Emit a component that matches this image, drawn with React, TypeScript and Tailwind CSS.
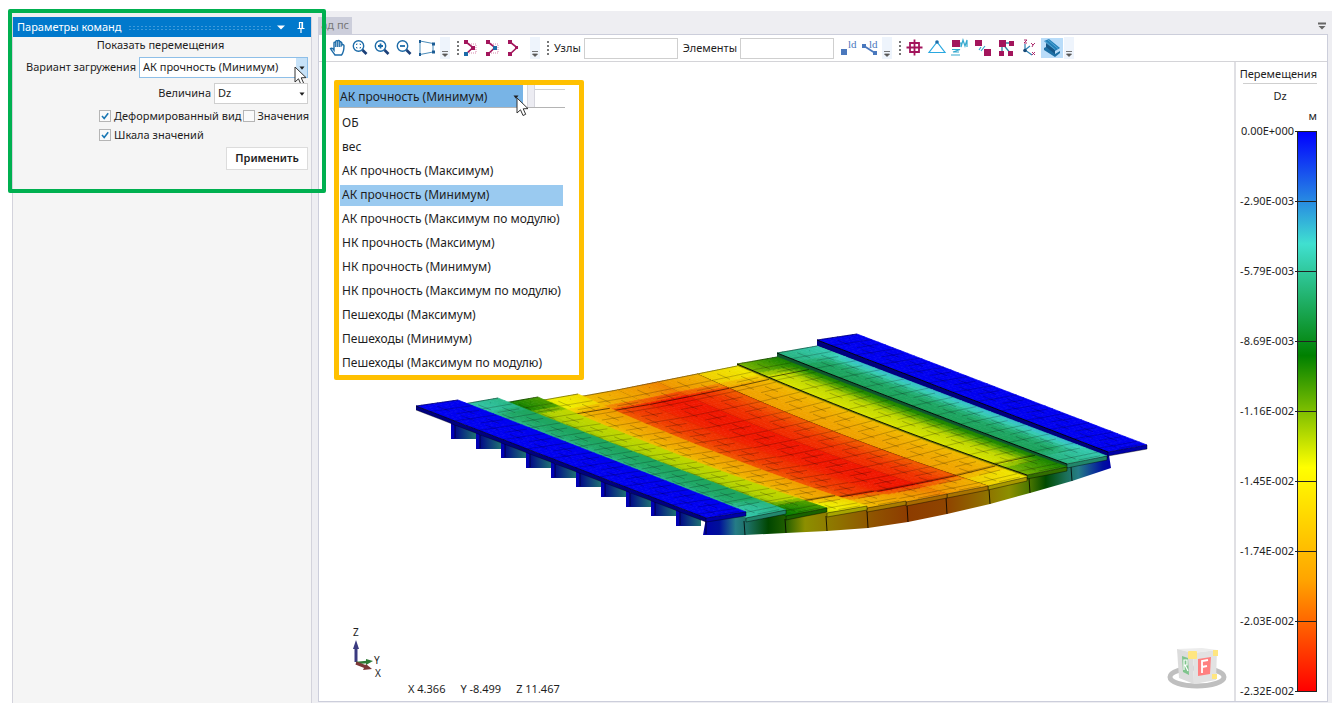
import { useState } from "react";
import type { ReactNode } from "react";
import { clsx } from "clsx";

const LOAD_CASES = [
  "ОБ",
  "вес",
  "АК прочность (Максимум)",
  "АК прочность (Минимум)",
  "АК прочность (Максимум по модулю)",
  "НК прочность (Максимум)",
  "НК прочность (Минимум)",
  "НК прочность (Максимум по модулю)",
  "Пешеходы (Максимум)",
  "Пешеходы (Минимум)",
  "Пешеходы (Максимум по модулю)",
];

const SCALE = [
  "0.00E+000",
  "-2.90E-003",
  "-5.79E-003",
  "-8.69E-003",
  "-1.16E-002",
  "-1.45E-002",
  "-1.74E-002",
  "-2.03E-002",
  "-2.32E-002",
];

// colour ramp, 0 = no displacement, 1 = maximum
const RAMP = [
  [0, 0, 255],
  [64, 224, 208],
  [0, 128, 0],
  [255, 255, 0],
  [255, 165, 0],
  [255, 0, 0],
];

const ramp = (t: number, light = 0.94) => {
  const x = Math.max(0, Math.min(0.9999, t)) * 5;
  const i = Math.floor(x);
  const f = x - i;
  const c = RAMP[i].map((a, n) =>
    Math.round((a + (RAMP[i + 1][n] - a) * f) * light)
  );
  return `rgb(${c.join(",")})`;
};

type Strip = {
  back: number[]; // xl, yl, xr, yr
  front: number[];
  end: number[]; // value at the supports, left and right edge
  mid: number[]; // value in the span: left edge, middle, right edge
  sag: number[];
  side: number; // height of the visible side face
};

const STRIPS: Strip[] = [
  { back: [416, 406, 458, 400], front: [706, 518, 746, 512], end: [0, 0], mid: [0, 0, 0], sag: [0, 0], side: 4 },
  { back: [458, 405, 498, 398], front: [746, 518, 786, 510], end: [0.22, 0.26], mid: [0.22, 0.295, 0.3], sag: [0, 1], side: 0 },
  { back: [498, 404, 538, 397], front: [786, 516, 827, 508], end: [0.4, 0.46], mid: [0.46, 0.55, 0.56], sag: [2, 4], side: 0 },
  { back: [538, 401, 578, 394], front: [827, 513, 867, 506], end: [0.57, 0.65], mid: [0.68, 0.76, 0.79], sag: [4, 5], side: 0 },
  { back: [578, 397, 617, 390], front: [867, 508, 906, 501], end: [0.72, 0.78], mid: [0.87, 0.92, 0.94], sag: [5, 6], side: 0 },
  { back: [617, 390, 657, 382], front: [906, 502, 947, 494], end: [0.78, 0.83], mid: [0.95, 0.97, 0.97], sag: [6, 6], side: 0 },
  { back: [657, 382, 697, 374], front: [947, 494, 988, 486], end: [0.81, 0.75], mid: [0.95, 0.93, 0.88], sag: [6, 5], side: 0 },
  { back: [697, 374, 737, 366], front: [988, 486, 1027, 477], end: [0.68, 0.62], mid: [0.79, 0.77, 0.73], sag: [5, 3], side: 1 },
  { back: [737, 364, 777, 357], front: [1027, 475, 1067, 467], end: [0.5, 0.42], mid: [0.58, 0.56, 0.41], sag: [3, 1], side: 3 },
  { back: [777, 353, 817, 346], front: [1067, 464, 1107, 456], end: [0.27, 0.22], mid: [0.31, 0.295, 0.17], sag: [1, 0], side: 5 },
  { back: [817, 340, 857, 334], front: [1108, 452, 1147, 445], end: [0, 0], mid: [0, 0, 0], sag: [0, 0], side: 6 },
];

const lerp = (a: number, b: number, t: number) => a + (b - a) * t;

const pointAt = (s: Strip, u: number, v: number) => {
  const x = lerp(lerp(s.back[0], s.back[2], u), lerp(s.front[0], s.front[2], u), v);
  const y = lerp(lerp(s.back[1], s.back[3], u), lerp(s.front[1], s.front[3], u), v);
  return [x, y + lerp(s.sag[0], s.sag[1], u) * 4 * v * (1 - v)];
};

const valueAt = (s: Strip, u: number, v: number) => {
  const d = Math.max(0, Math.min(1, (Math.min(v, 1 - v) - 0.06) / 0.05));
  const mid = u < 0.5 ? lerp(s.mid[0], s.mid[1], u * 2) : lerp(s.mid[1], s.mid[2], u * 2 - 1);
  return lerp(lerp(s.end[0], s.end[1], u), mid, d);
};

const fmt = (p: number[]) => `${p[0].toFixed(1)},${p[1].toFixed(1)}`;

const edge = (s: Strip, u: number, from = 0, to = 1, drop = 0) =>
  Array.from({ length: 13 }, (_, i) => {
    const [x, y] = pointAt(s, u, lerp(from, to, i / 12));
    return fmt([x, y + drop]);
  });

const ACROSS = 8;
const ALONG = 40;
const CUTS = 12;

const DeckStrip = ({ strip, index }: { strip: Strip; index: number }) => {
  const facets: ReactNode[] = [];
  for (let i = 0; i < ACROSS; i++) {
    for (let j = 0; j < ALONG; j++) {
      const [u0, u1, v0, v1] = [i / ACROSS, (i + 1) / ACROSS, j / ALONG, (j + 1) / ALONG];
      const color = ramp(valueAt(strip, (u0 + u1) / 2, (v0 + v1) / 2));
      facets.push(
        <polygon
          key={`${i}-${j}`}
          points={[
            pointAt(strip, u0, v0),
            pointAt(strip, u1, v0),
            pointAt(strip, u1, v1),
            pointAt(strip, u0, v1),
          ].map(fmt).join(" ")}
          fill={color}
          stroke={color}
          strokeWidth="0.7"
        />
      );
    }
  }

  const [x1, y1, x2, y2] = strip.front;
  const lip = lerp(strip.end[0], strip.end[1], 0.5);
  const inner = index > 2 && index < 9;

  return (
    <g>
      {facets}
      {strip.side > 0 && (
        <polygon
          points={[...edge(strip, 0), ...edge(strip, 0, 1, 0, strip.side)].join(" ")}
          fill={ramp(strip.mid[0], 0.5)}
        />
      )}
      <polygon
        points={`${x1},${y1} ${x2},${y2} ${x2},${y2 + 4} ${x1},${y1 + 4}`}
        fill={ramp(lip, 0.66)}
        stroke="#000"
        strokeOpacity="0.7"
        strokeWidth="0.6"
      />
      <g fill="none" stroke="#000" strokeWidth="0.7">
        <g strokeOpacity="0.36" strokeWidth="0.6">
          <polyline points={edge(strip, 0.36, 0.02, 0.98).join(" ")} strokeDasharray="14 12" />
          <polyline points={edge(strip, 0.66, 0.02, 0.98).join(" ")} strokeDasharray="14 12" strokeDashoffset="13" />
          {Array.from({ length: CUTS }, (_, j) => {
            const full = (j + 0.6) / CUTS;
            const half = Math.min(0.99, (j + 1.05) / CUTS);
            return (
              <path
                key={j}
                d={`M${fmt(pointAt(strip, 0, full))} L${fmt(pointAt(strip, 1, full))} M${fmt(pointAt(strip, 0.36, half))} L${fmt(pointAt(strip, 0.9, half))}`}
              />
            );
          })}
        </g>
        {inner && (
          <path
            d={`M${fmt(pointAt(strip, 0, 0.11))} L${fmt(pointAt(strip, 1, 0.11))} M${fmt(pointAt(strip, 0, 0.89))} L${fmt(pointAt(strip, 1, 0.89))}`}
            strokeOpacity="0.8"
          />
        )}
        <polyline
          points={edge(strip, 0).join(" ")}
          strokeOpacity={index > 6 || index === 0 ? 0.9 : 0.5}
          strokeWidth={index > 6 ? 1 : 0.7}
        />
        {strip.side > 2 && (
          <polyline points={edge(strip, 0, 0, 1, strip.side).join(" ")} strokeOpacity="0.5" />
        )}
        <path
          d={`M${strip.back[0]},${strip.back[1]} L${strip.back[2]},${strip.back[3]}`}
          strokeOpacity="0.6"
        />
      </g>
    </g>
  );
};

const FRONT_BOTTOM = [
  [703, 535], [745, 535], [786, 533], [827, 531], [868, 528], [908, 522],
  [947, 514], [990, 504], [1030, 493], [1072, 481], [1111, 468],
];

const FACE_STOPS = [
  ["0", "#0000a8"], ["0.04", "#00109a"], ["0.08", "#257c86"], ["0.11", "#1c6f62"],
  ["0.16", "#004600"], ["0.2", "#1e5c00"], ["0.25", "#8c8f00"], ["0.33", "#8f7300"],
  ["0.42", "#8f5200"], ["0.5", "#8d3c00"], ["0.6", "#8f4500"], ["0.68", "#8f6a00"],
  ["0.75", "#8c8f00"], ["0.8", "#4a7600"], ["0.84", "#004a00"], ["0.89", "#1c7058"],
  ["0.92", "#257c86"], ["0.98", "#0010a0"], ["1", "#0000a8"],
];

const Bridge = () => (
  <g>
    <defs>
      <linearGradient id="face" x1="703" x2="1111" y1="0" y2="0" gradientUnits="userSpaceOnUse">
        {FACE_STOPS.map(([offset, color]) => (
          <stop key={offset} offset={offset} stopColor={color} />
        ))}
      </linearGradient>
      <linearGradient id="tooth" x1="0" x2="1" y1="0" y2="0">
        <stop offset="0.1" stopColor="#00008a" />
        <stop offset="0.45" stopColor="#0a2f80" />
        <stop offset="1" stopColor="#1f7272" />
      </linearGradient>
    </defs>

    {Array.from({ length: 10 }, (_, i) => {
      const x = 451 + 25 * i;
      const y = 439 + 10 * i - Math.round(i / 3);
      return (
        <g key={i}>
          <polygon points={`${x},${y - 16} ${x + 25},${y - 8} ${x + 25},${y} ${x},${y}`} fill="url(#tooth)" />
          <polygon points={`${x},${y - 16} ${x + 4},${y - 16} ${x + 4},${y - 1} ${x},${y}`} fill="#0000b4" />
          <path d={`M${x + 4},${y - 14} V${y - 1}`} stroke="#000030" strokeWidth="0.8" />
        </g>
      );
    })}

    <polygon
      points={`706,518 746,514 827,511 906,503 988,488 1067,467 1109,455 ${[...FRONT_BOTTOM].reverse().map((p) => p.join(",")).join(" ")}`}
      fill="url(#face)"
    />
    {FRONT_BOTTOM.slice(1, -1).map(([x, y], i) => (
      <path
        key={x}
        d={`M${x - 1},${STRIPS[i + 1].front[1] + 3} L${x},${y}`}
        stroke="#000"
        strokeWidth="0.8"
      />
    ))}
    <path d="M706,520 V534" stroke="#000040" strokeWidth="1" />

    {STRIPS.map((strip, i) => (
      <DeckStrip key={i} strip={strip} index={i} />
    )).reverse()}
  </g>
);

const Axes = () => (
  <g>
    <path d="M356,662 V646" stroke="#3a3a80" strokeWidth="3" />
    <path d="M353,649 L356,640 L359,649Z" fill="#3a3a80" />
    <path d="M356,663 L367,662" stroke="#2f7a36" strokeWidth="2.5" />
    <path d="M366,659 L373,661 L366,665Z" fill="#2f7a36" />
    <path d="M356,663 L366,667" stroke="#7c3838" strokeWidth="3" />
    <path d="M366,664 L372,669 L363,670Z" fill="#7c3838" />
    <g fontSize="10" fill="#222" fontFamily="'Noto Sans', sans-serif">
      <text x="353" y="636">Z</text>
      <text x="374" y="664">Y</text>
      <text x="375" y="677">X</text>
    </g>
  </g>
);

const ViewCube = () => (
  <g>
    <ellipse cx="1197" cy="677" rx="27" ry="9" fill="none" stroke="#bfbfbf" strokeWidth="5" />
    <polygon points="1177,649 1202,648 1217,650 1193,653" fill="#ececec" />
    <polygon points="1177,649 1193,653 1194,684 1179,678" fill="#dcdcdc" />
    <polygon points="1193,653 1217,650 1216,680 1194,684" fill="#e2e2e2" />
    <polygon points="1182,656 1188,658 1189,675 1183,672" fill="#7fc48c" />
    <polygon points="1198,659 1211,657 1210,674 1198,676" fill="#ff8080" />
    <path d="M1184,670 V660 H1187 V665 H1184 M1185,665 L1188,671" fill="none" stroke="#fff" strokeWidth="1.2" />
    <path d="M1202,673 V661 L1208,660 M1202,667 L1207,666" fill="none" stroke="#fff" strokeWidth="1.8" />
    <rect x="1188" y="651" width="9" height="8" rx="1" fill="#ffe680" />
    <rect x="1213" y="650" width="5" height="6" fill="#ffe680" />
    <rect x="1212" y="674" width="5" height="5" fill="#ffe680" />
  </g>
);

const Cursor = ({ className }: { className: string }) => (
  <svg viewBox="0 0 13 20" className={clsx("pointer-events-none absolute h-5 w-[13px]", className)}>
    <path
      d="M1,1 V16 L4.5,12.8 L7,18.5 L9.7,17.3 L7.2,11.8 L12,11.6Z"
      fill="#fff"
      stroke="#333"
      strokeWidth="1"
    />
  </svg>
);

const Lens = ({ children }: { children: ReactNode }) => (
  <g fill="none" stroke="#1c6ba8">
    <circle cx="8.5" cy="8" r="5.2" strokeWidth="1.4" />
    <path d="M12.5,12 L16.5,16" stroke="#1b3f78" strokeWidth="2.6" />
    {children}
  </g>
);

const MAGENTA = "#a3155c";

const icons: Record<string, ReactNode> = {
  "Панорама": (
    <path
      d="M7,17 C5,14 3.5,12.5 2.5,10.5 C3.5,9.5 5,10.5 6,12 V5 C6,3.8 7.6,3.8 7.8,5 V9 V3.5 C8,2.3 9.6,2.3 9.8,3.5 V9 V3.2 C10,2.2 11.6,2.2 11.8,3.4 V9 V4.5 C12,3.5 13.6,3.6 13.8,4.8 V7 C14.5,6 16,6.5 16,7.8 C16,12 16,14 13.5,17Z"
      fill="#fff"
      stroke="#1c6ba8"
      strokeWidth="1.4"
    />
  ),
  "Показать всё": (
    <Lens>
      <path d="M6.5,7 V6 H7.5 M9.5,6 H10.5 V7 M10.5,9 V10 H9.5 M7.5,10 H6.5 V9" strokeWidth="0.9" />
    </Lens>
  ),
  "Увеличить": (
    <Lens>
      <path d="M6,8 H11 M8.5,5.5 V10.5" strokeWidth="1.8" />
    </Lens>
  ),
  "Уменьшить": (
    <Lens>
      <path d="M6,8 H11" strokeWidth="1.8" />
    </Lens>
  ),
  "Рамка": (
    <g fill="#1c5c94">
      <path d="M4,3 L17,5.5 V14 L4,16.5Z" fill="none" stroke="#4a8cba" />
      <rect x="3" y="2" width="2" height="3" />
      <rect x="16" y="4.5" width="3" height="3" />
      <rect x="16" y="12.5" width="3" height="3" />
      <rect x="3" y="15" width="2" height="3" />
    </g>
  ),
  "Узлы и элементы": (
    <g>
      <path d="M8,6 H15 V15 H8" fill="none" stroke="#d88aae" strokeDasharray="1 1" />
      <path d="M5,4 L12,9.5 L5,16" fill="none" stroke={MAGENTA} strokeWidth="1.6" />
      <rect x="3" y="2" width="4" height="4" fill={MAGENTA} />
      <rect x="3" y="14" width="4" height="4" fill="#1c6ba8" />
      <rect x="10" y="8" width="4" height="4" fill={MAGENTA} />
    </g>
  ),
  "Выбор узлов": (
    <g>
      <path d="M8,6 H15 V15 H8" fill="none" stroke="#d88aae" strokeDasharray="1 1" />
      <path d="M5,4 L12,9.5 L5,16" fill="none" stroke={MAGENTA} strokeWidth="1.6" />
      <rect x="3" y="2" width="4" height="4" fill={MAGENTA} />
      <rect x="3" y="14" width="4" height="4" fill={MAGENTA} />
      <rect x="10" y="8" width="4" height="4" fill="#1c6ba8" />
    </g>
  ),
  "Выбор элементов": (
    <g>
      <path d="M5,4 L12,9.5 L5,16" fill="none" stroke={MAGENTA} strokeWidth="1.6" />
      <rect x="3" y="2" width="4" height="4" fill={MAGENTA} />
      <rect x="3" y="14" width="4" height="4" fill={MAGENTA} />
      <rect x="10" y="8" width="3" height="3" fill={MAGENTA} />
    </g>
  ),
  "Номера узлов": (
    <g fill="#4a78bd">
      <rect x="2" y="11" width="6" height="6" />
      <text x="9" y="10" fontSize="11" fontFamily="'Liberation Serif', serif">ld</text>
    </g>
  ),
  "Номера элементов": (
    <g fill="#4a78bd">
      <path d="M3,8 L14,15" stroke="#4a78bd" strokeWidth="1.8" />
      <rect x="1" y="6" width="4" height="4" />
      <rect x="12" y="13" width="4" height="4" />
      <text x="8" y="10" fontSize="11" fontFamily="'Liberation Serif', serif">ld</text>
    </g>
  ),
  "Показать узлы": (
    <path d="M6,5 H15 V14 H6Z M10.5,1.5 V17.5 M2.5,9.5 H18.5" fill="none" stroke={MAGENTA} strokeWidth="1.8" />
  ),
  "Опоры": (
    <g>
      <path d="M10,4 L2,14.5 H18Z" fill="none" stroke="#2aa8e0" strokeWidth="1.2" />
      <circle cx="10" cy="4" r="1.8" fill="#1c6ba8" />
    </g>
  ),
  "Нагрузки": (
    <g fill="none" stroke="#35a9cf">
      <rect x="2" y="2" width="8" height="7" fill={MAGENTA} stroke="none" />
      <path d="M10,5 H11 V9 L13,2 L15,8 L17,2 V9 M2,11.5 H10 L3,14 H9 M1,17 H10" strokeWidth="1.2" />
    </g>
  ),
  "Связи": (
    <g>
      <rect x="2" y="2" width="7" height="6" fill={MAGENTA} />
      <rect x="11" y="11" width="7" height="7" fill={MAGENTA} />
      <path d="M6,12 L8,9 M8,13 L12,8" stroke="#35a9cf" strokeWidth="1.2" />
    </g>
  ),
  "Жёсткие вставки": (
    <g fill={MAGENTA}>
      <path d="M6,5 H15 M6,5 V16 M6,5 L15,16" stroke="#2b85a0" strokeWidth="1.3" />
      <rect x="3" y="2" width="7" height="7" />
      <rect x="13" y="3" width="5" height="5" />
      <rect x="3" y="13" width="5" height="5" />
      <rect x="12" y="13" width="5" height="5" />
    </g>
  ),
  "Локальные оси": (
    <g fill="none" strokeWidth="1.2">
      <path d="M6,13 V6 M6,12 L13,17 M6,12 L11,8" stroke="#2b7fb0" />
      <circle cx="6" cy="12.5" r="1.8" fill="#174a78" stroke="none" />
      <path d="M5,2 H8 L5,5 H8 M12,5 L14,7 L16,5 M14,7 L13,9 M13,14 L16,17 M16,14 L13,17" stroke={MAGENTA} strokeWidth="0.9" />
    </g>
  ),
  "Профиль": (
    <g>
      <path d="M2,3 L7,1 L18,10 L13,13Z" fill="#2480ba" />
      <path d="M4,5 L13,12 V17 L4,10Z" fill="#155788" />
      <path d="M2,10 L4,9 L13,16 L18,13 V15 L13,19 L2,12Z" fill="#1d6fa4" />
      <path d="M3,3 L13,11.5 M6,2 L16,10.5" stroke="#5fb2dc" strokeWidth="0.8" />
    </g>
  ),
};

const Tool = ({ name, active }: { name: string; active?: boolean }) => (
  <button
    type="button"
    title={name}
    aria-label={name}
    className={clsx("flex h-5 w-[22px] shrink-0 items-center justify-center", active && "bg-[#b9dcf9]")}
  >
    <svg viewBox="0 0 20 20" className="h-5 w-5">
      {icons[name]}
    </svg>
  </button>
);

const Overflow = () => (
  <button
    type="button"
    aria-label="Ещё"
    className="flex h-[22px] w-[10px] shrink-0 items-end justify-center bg-[#eef4fc] pb-[2px]"
  >
    <svg viewBox="0 0 6 6" className="size-[6px]">
      <path d="M0,0.5 H6 M0.5,3 H5.5 L3,5.5Z" fill="#555" stroke="#555" strokeWidth="0.8" />
    </svg>
  </button>
);

const Grip = () => (
  <span className="mr-px ml-[7px] h-[14px] w-0 shrink-0 border-l-2 border-dotted border-[#777]" />
);

const Toolbar = () => (
  <div className="flex h-[27px] shrink-0 items-center border-b border-[#d4d4d8] bg-white pl-2">
    <Tool name="Панорама" />
    <Tool name="Показать всё" />
    <Tool name="Увеличить" />
    <Tool name="Уменьшить" />
    <Tool name="Рамка" />
    <span className="w-[3px]" />
    <Overflow />
    <Grip />
    <Tool name="Узлы и элементы" />
    <Tool name="Выбор узлов" />
    <Tool name="Выбор элементов" />
    <span className="w-1" />
    <Overflow />
    <Grip />
    <label htmlFor="nodes" className="ml-1">Узлы</label>
    <input id="nodes" className="mr-[5px] ml-[3px] h-[21px] w-[94px] border border-[#cfcfcf] bg-white px-1" />
    <label htmlFor="elements">Элементы</label>
    <input id="elements" className="mr-1 ml-[3px] h-[21px] w-[94px] border border-[#cfcfcf] bg-white px-1" />
    <Tool name="Номера узлов" />
    <Tool name="Номера элементов" />
    <Overflow />
    <Grip />
    <div className="ml-px flex gap-px">
      <Tool name="Показать узлы" />
      <Tool name="Опоры" />
      <Tool name="Нагрузки" />
      <Tool name="Связи" />
      <Tool name="Жёсткие вставки" />
      <Tool name="Локальные оси" />
      <Tool name="Профиль" active />
    </div>
    <span className="w-px" />
    <Overflow />
  </div>
);

const Triangle = ({ className }: { className?: string }) => (
  <svg viewBox="0 0 6 4" className={clsx("pointer-events-none h-1 w-[6px]", className)}>
    <path d="M0.5,0.5 H5.5 L3,3.8Z" fill="currentColor" />
  </svg>
);

const CheckBox = ({ label, defaultChecked }: { label: string; defaultChecked?: boolean }) => (
  <label className="flex items-center gap-[3px] whitespace-nowrap">
    <span className="relative block size-3">
      <input
        type="checkbox"
        defaultChecked={defaultChecked}
        className="peer block size-3 appearance-none border border-[#b5b5b5] bg-[#fafafa]"
      />
      <svg
        viewBox="0 0 12 12"
        className="pointer-events-none absolute inset-0 hidden size-3 peer-checked:block"
      >
        <path d="M3,6 L5.2,8.5 L9.2,3.2" fill="none" stroke="#1a78b4" strokeWidth="1.6" />
      </svg>
    </span>
    {label}
  </label>
);

const CommandPanel = ({
  loadCase,
  onChange,
}: {
  loadCase: string;
  onChange: (value: string) => void;
}) => (
  <aside className="relative flex w-[300px] shrink-0 flex-col border-x border-[#d3d3dc] bg-[#f5f5f5]">
    <header className="flex h-5 items-center bg-[#0179cc] pr-[6px] pl-1 text-white">
      <h1 className="whitespace-nowrap">Параметры команд</h1>
      <span className="mx-[6px] h-[5px] flex-1 bg-[radial-gradient(#3f9ada_1px,transparent_1px)] bg-[size:4px_3px]" />
      <button type="button" aria-label="Меню" className="mr-3 flex">
        <svg viewBox="0 0 8 5" className="h-[5px] w-2">
          <path d="M0,0.5 H8 L4,4.5Z" fill="#fff" />
        </svg>
      </button>
      <button type="button" aria-label="Закрепить" className="flex">
        <svg viewBox="0 0 8 11" className="h-[11px] w-2" fill="none" stroke="#fff">
          <path d="M2.5,6 V0.5 H5.5 V6 M5,1 V6 M0.5,6.5 H7.5 M4,7 V11" strokeWidth="1.2" />
        </svg>
      </button>
    </header>

    <form className="flex flex-col pr-[3px]" onSubmit={(e) => e.preventDefault()}>
      <h2 className="h-5 text-center leading-4">Показать перемещения</h2>
      <div className="flex items-center justify-end gap-[3px]">
        <label htmlFor="load-case">Вариант загружения</label>
        <span className="relative flex h-[21px] w-[169px] border border-[#8ebfe8] bg-white">
          <select
            id="load-case"
            value={loadCase}
            onChange={(e) => onChange(e.target.value)}
            className="w-full appearance-none pl-[3px] outline-none"
          >
            {LOAD_CASES.map((name) => (
              <option key={name}>{name}</option>
            ))}
          </select>
          <span className="pointer-events-none absolute inset-y-0 right-0 flex w-[11px] items-center justify-center bg-[#c7e2f8]">
            <Triangle />
          </span>
          <Cursor className="right-0 top-2" />
        </span>
      </div>
      <div className="mt-[5px] flex items-center justify-end gap-[3px]">
        <label htmlFor="value">Величина</label>
        <span className="relative flex h-[21px] w-[94px] border border-[#cfcfcf] bg-white">
          <select id="value" defaultValue="Dz" className="w-full appearance-none pl-[3px] outline-none">
            <option>Dx</option>
            <option>Dy</option>
            <option>Dz</option>
          </select>
          <Triangle className="absolute top-2 right-[2px]" />
        </span>
      </div>
      <div className="mt-[3px] flex flex-col gap-px pl-[86px] leading-[18px]">
        <div className="flex gap-px">
          <CheckBox label="Деформированный вид" defaultChecked />
          <CheckBox label="Значения" />
        </div>
        <CheckBox label="Шкала значений" defaultChecked />
      </div>
      <button
        type="submit"
        className="mt-[3px] h-[23px] w-[82px] self-end border border-[#dcdcdc] bg-white font-semibold"
      >
        Применить
      </button>
    </form>

    <div className="pointer-events-none absolute -top-2 -right-[15px] -left-[5px] h-[184px] rounded-[2px] border-4 border-[#00b050]" />
  </aside>
);

const LoadCaseList = ({
  loadCase,
  onChange,
}: {
  loadCase: string;
  onChange: (value: string) => void;
}) => (
  <div className="absolute top-[18px] left-[15px] w-[250px] rounded-[2px] border-[5px] border-[#ffc000] bg-white text-xs">
    <div className="flex h-[23px] w-[226px] border-b border-[#b4b4b4]">
      <span className="relative flex w-[184px] bg-[#78b4e6]">
        <select
          aria-label="Вариант загружения"
          value={loadCase}
          onChange={(e) => onChange(e.target.value)}
          className="w-full appearance-none pt-[2px] pl-px outline-none"
        >
          {LOAD_CASES.map((name) => (
            <option key={name}>{name}</option>
          ))}
        </select>
        <Triangle className="absolute top-[10px] right-1" />
        <Cursor className="-right-[6px] top-3" />
      </span>
      <span className="ml-1 w-2 border-x border-[#d6d6de] bg-[#ececf2]" />
      <span className="mt-1 flex-1 border-t border-[#d0d0d0]" />
    </div>
    <ul role="listbox" aria-label="Варианты загружения" className="mr-4 ml-px pt-[3px]">
      {LOAD_CASES.map((name) => (
        <li key={name} role="option" aria-selected={name === loadCase} className="flex h-6 items-center">
          <button
            type="button"
            onClick={() => onChange(name)}
            className={clsx(
              "h-[21px] w-full pl-[2px] text-left leading-5 whitespace-nowrap",
              name === loadCase && "bg-[#9acaf0]"
            )}
          >
            {name}
          </button>
        </li>
      ))}
    </ul>
  </div>
);

const Legend = () => (
  <aside className="flex w-[93px] shrink-0 flex-col border-l-2 border-[#e0e0e4] bg-white pr-[10px] pb-[9px] pl-[7px]">
    <h2 className="flex h-[22px] justify-end border-b border-[#cfcfcf] leading-6 whitespace-nowrap">
      Перемещения
    </h2>
    <p className="text-center leading-6">Dz</p>
    <p className="h-[23px] text-right leading-4">м</p>
    <div className="relative flex flex-1 justify-end">
      <div className="w-5 border border-[#222] bg-[linear-gradient(#00f,#40e0d0_20%,#008000_40%,#ff0_60%,#ffa500_80%,#f00)]" />
      <ul className="absolute inset-y-0 right-0 flex flex-col justify-between whitespace-nowrap">
        {SCALE.map((value) => (
          <li key={value} className="flex h-px items-center justify-end gap-px">
            {value}
            <span className="h-px w-[22px] bg-[#222]" />
          </li>
        ))}
      </ul>
    </div>
  </aside>
);

export default function App() {
  const [loadCase, setLoadCase] = useState("АК прочность (Минимум)");

  return (
    <div className="flex min-h-screen flex-col bg-white px-3 pt-[11px] pb-[9px] font-['Noto_Sans',sans-serif] text-[11px] text-[#1e1e1e]">
      <div className="flex flex-1 gap-[6px] bg-[#eeeef2] pt-[6px]">
        <CommandPanel loadCase={loadCase} onChange={setLoadCase} />

        <main className="mr-1 mb-px flex min-w-0 flex-1 flex-col">
          <div className="flex h-[17px] shrink-0 items-center justify-between pr-[2px]">
            <span className="flex h-full w-[34px] items-center justify-end bg-[#ccceDB] pr-[3px] whitespace-nowrap text-[#777]">
              ад пс
            </span>
            <button type="button" aria-label="Список вкладок">
              <svg viewBox="0 0 8 8" className="size-2">
                <path d="M0,0.5 H8 V2.5 H0Z M0.5,4 H7.5 L4,7.5Z" fill="#666" />
              </svg>
            </button>
          </div>
          <div className="flex flex-1 flex-col border border-[#ccceDB] bg-white">
            <Toolbar />
            <div className="flex flex-1">
              <section className="relative min-w-0 flex-1">
                <svg viewBox="319 62 915 639" className="absolute inset-0 size-full">
                  <Bridge />
                  <Axes />
                  <ViewCube />
                </svg>
                <LoadCaseList loadCase={loadCase} onChange={setLoadCase} />
                <p className="absolute bottom-1 left-[89px] flex gap-[15px] leading-4 whitespace-pre">
                  <span>X 4.366</span>
                  <span>Y -8.499</span>
                  <span>Z 11.467</span>
                </p>
              </section>
              <Legend />
            </div>
          </div>
        </main>
      </div>
    </div>
  );
}
